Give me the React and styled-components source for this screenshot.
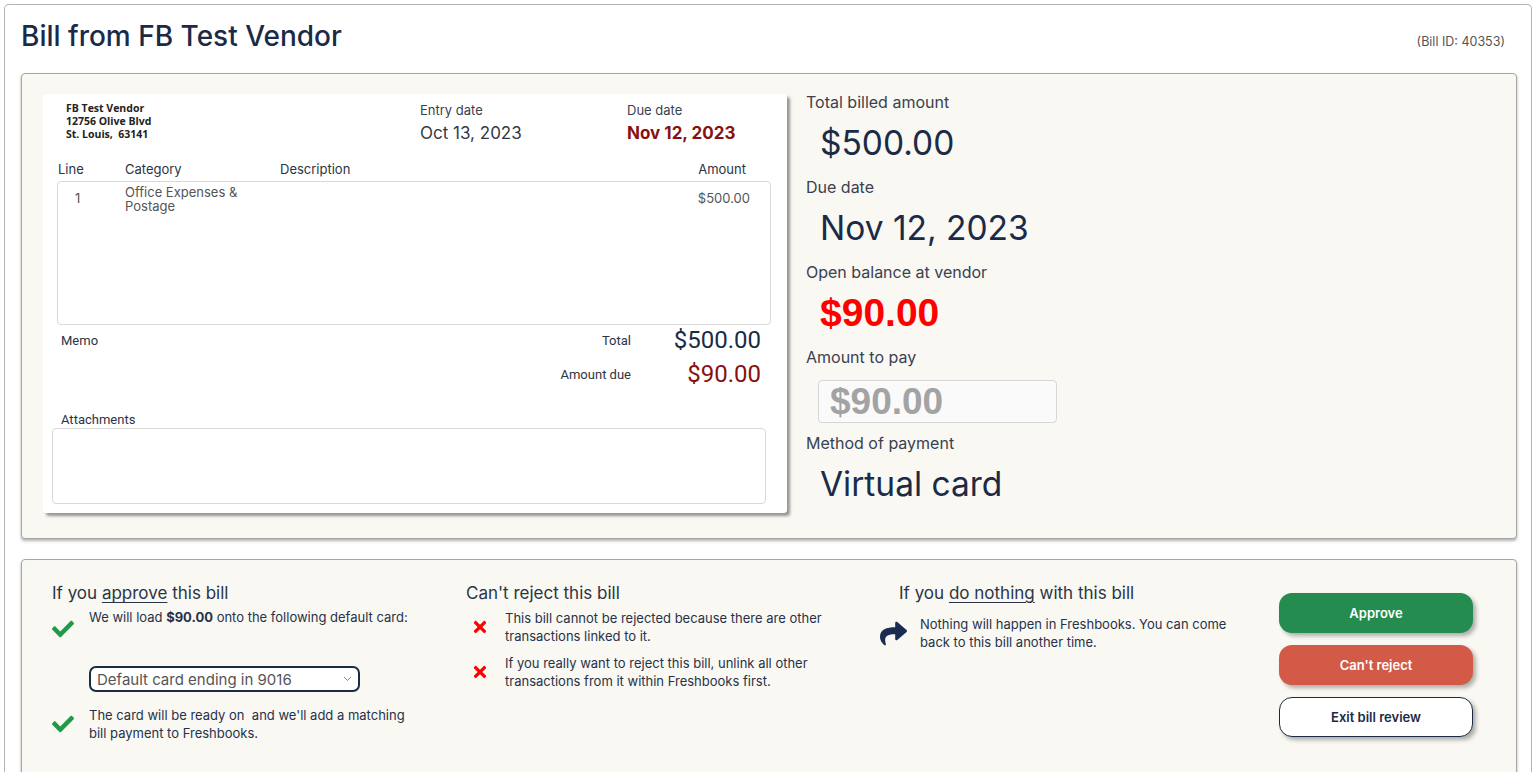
import React from 'react'
import styled, { createGlobalStyle } from 'styled-components'
import { FaCheck, FaTimes, FaShare } from 'react-icons/fa'

const GlobalStyle = createGlobalStyle`
  body {
    margin: 0;
    background: #fff;
    font-family: Inter, "Noto Sans", sans-serif;
    color: #1c2b45;
  }
`

const Page = styled.div`
  padding: 4px 4px 0;
`
const Frame = styled.div`
  border: 1px solid #b4b4b4;
  border-bottom: none;
  border-radius: 5px 5px 0 0;
  padding: 0 14px 0 16px;
  background: #fff;
`
const Header = styled.div`
  display: flex;
  justify-content: space-between;
  align-items: center;
  padding-top: 13px;
  margin-bottom: 19px;
`
const Title = styled.h1`
  margin: 0;
  font-size: 28px;
  line-height: 36px;
  font-weight: 500;
  color: #1b2b47;
`
const BillId = styled.div`
  font-size: 12.5px;
  color: #555;
  margin-right: 12px;
  margin-top: 10px;
`
const Panel = styled.div`
  background: #f9f8f2;
  border: 1px solid #a6a6a6;
  border-radius: 4px;
  box-shadow: 0 2px 3px rgba(0, 0, 0, 0.3);
`
const TopPanel = styled(Panel)`
  display: flex;
  align-items: flex-start;
  gap: 19px;
  padding: 20px 21px 25px;
`
const Invoice = styled.div`
  width: 744px;
  box-sizing: border-box;
  background: #fff;
  border-radius: 3px;
  box-shadow: 3px 3px 3px rgba(0, 0, 0, 0.4);
  padding: 7px 16px 9px 9px;
`
const InvoiceHead = styled.div`
  display: grid;
  grid-template-columns: 354px 207px 1fr;
  padding-left: 14px;
`
const Vendor = styled.div`
  font-family: "Open Sans", "Noto Sans", sans-serif;
  font-weight: 700;
  font-size: 10.5px;
  line-height: 13px;
  color: #222;
  padding-top: 1px;
`
const DateLabel = styled.div`
  font-size: 13px;
  line-height: 16px;
  margin-top: 1px;
  color: #3a4150;
`
const DateValue = styled.div`
  font-size: 17px;
  line-height: 22px;
  margin-top: 4px;
  color: ${p => (p.$due ? '#8a1010' : '#333a45')};
  font-weight: ${p => (p.$due ? 700 : 400)};
`
const LineGrid = styled.div`
  display: grid;
  grid-template-columns: 67px 155px 1fr 120px;
  font-size: 13px;
`
const LineHead = styled(LineGrid)`
  margin-top: 13px;
  padding: 0 25px 0 6px;
  line-height: 24px;
  color: #2b3444;
  & > :last-child {
    text-align: right;
  }
`
const LineBox = styled.div`
  margin-left: 5px;
  height: 144px;
  box-sizing: border-box;
  border: 1px solid #d8d8d8;
  border-radius: 4px;
  padding: 3px 20px 0 0;
`
const LineRow = styled(LineGrid)`
  color: #555;
  line-height: 14px;
`
const LineNo = styled.div`
  padding: 6px 0 0 17px;
`
const LineAmount = styled.div`
  text-align: right;
  padding-top: 6px;
`
const Totals = styled.div`
  display: grid;
  grid-template-columns: 1fr auto 130px;
  align-items: center;
  row-gap: 4px;
  padding: 0 10px 0 9px;
  font-family: Roboto, sans-serif;
`
const SmallLabel = styled.div`
  font-family: Roboto, sans-serif;
  font-size: 13px;
  color: #2b3444;
  text-align: ${p => (p.$right ? 'right' : 'left')};
`
const Money = styled.div`
  font-family: Roboto, sans-serif;
  font-size: 24px;
  line-height: 30px;
  text-align: right;
  color: ${p => (p.$due ? '#8a1010' : '#1c2b45')};
`
const AttachLabel = styled(SmallLabel)`
  margin: 23px 0 0 9px;
  line-height: 16px;
`
const AttachBox = styled.div`
  height: 74px;
  border: 1px solid #d8d8d8;
  border-radius: 4px;
  margin-right: 5px;
`
const Summary = styled.div`
  display: flex;
  flex-direction: column;
  margin-top: -3px;
  & > :last-child {
    margin-bottom: 0;
  }
`
const SumLabel = styled.div`
  font-size: 16px;
  line-height: 22px;
  color: #3a4150;
`
const SumValue = styled.div`
  font-size: ${p => (p.$red ? 39 : 33.5)}px;
  line-height: 44px;
  margin: 8px 0 11px 14px;
  color: ${p => (p.$red ? '#f00' : '#1b2b47')};
  font-family: ${p => (p.$red ? '"Liberation Sans", Arial, sans-serif' : 'Inter, sans-serif')};
  font-weight: ${p => (p.$red ? 700 : 400)};
`
const PayInput = styled.div`
  width: 239px;
  height: 43px;
  box-sizing: border-box;
  margin: 12px 0 9px 12px;
  border: 1px solid #d6d6d6;
  border-radius: 4px;
  background: #fafafa;
  font-family: "Liberation Sans", Arial, sans-serif;
  font-weight: 700;
  font-size: 37px;
  line-height: 41px;
  padding-left: 11px;
  color: #a3a3a3;
`
const BottomPanel = styled(Panel)`
  margin-top: 20px;
  display: grid;
  grid-template-columns: 414px 433px 1fr 194px;
  padding: 22px 43px 60px 30px;
  color: #27324a;
`
const Col = styled.div`
  display: flex;
  flex-direction: column;
`
const ColTitle = styled.div`
  font-size: 17px;
  line-height: 22px;
  color: #2b3447;
  u {
    text-underline-offset: 3px;
  }
`
const Item = styled.div`
  display: flex;
  align-items: center;
  gap: ${p => p.$gap || 15}px;
  min-height: 36px;
  margin-top: ${p => p.$mt || 0}px;
  margin-left: ${p => p.$ml || 0}px;
  font-size: 13px;
  line-height: 18px;
  & > svg {
    flex: none;
    margin-top: ${p => p.$iconDrop || 0}px;
  }
`
const ItemText = styled.div`
  align-self: flex-start;
  max-width: ${p => p.$w || 330}px;
  b {
    font-weight: 700;
  }
`
const CardSelect = styled.div`
  margin: 22px 0 14px 37px;
  width: 271px;
  height: 26px;
  box-sizing: border-box;
  border: 2px solid #1c2b45;
  border-radius: 7px;
  display: flex;
  align-items: center;
  justify-content: space-between;
  padding: 0 6px;
  font-size: 15px;
  color: #555;
  background: #fff;
`
const Buttons = styled.div`
  display: flex;
  flex-direction: column;
  gap: 12px;
  margin-top: 11px;
`
const Btn = styled.div`
  height: 40px;
  box-sizing: border-box;
  border-radius: 13px;
  display: flex;
  align-items: center;
  justify-content: center;
  font-size: 13px;
  font-weight: 600;
  box-shadow: 3px 3px 4px rgba(0, 0, 0, 0.3);
  background: ${p => p.$bg};
  color: ${p => (p.$bg === '#fff' ? '#1c2b45' : '#fff')};
  border: ${p => (p.$bg === '#fff' ? '1px solid #1c2b45' : 'none')};
`

export default function App() {
  return (
    <Page>
      <GlobalStyle />
      <Frame>
        <Header>
          <Title>Bill from FB Test Vendor</Title>
          <BillId>(Bill ID: 40353)</BillId>
        </Header>
        <TopPanel>
          <Invoice>
            <InvoiceHead>
              <Vendor>
                FB Test Vendor
                <br />
                12756 Olive Blvd
                <br />
                St. Louis,&nbsp; 63141
              </Vendor>
              <div>
                <DateLabel>Entry date</DateLabel>
                <DateValue>Oct 13, 2023</DateValue>
              </div>
              <div>
                <DateLabel>Due date</DateLabel>
                <DateValue $due>Nov 12, 2023</DateValue>
              </div>
            </InvoiceHead>
            <LineHead>
              <div>Line</div>
              <div>Category</div>
              <div>Description</div>
              <div>Amount</div>
            </LineHead>
            <LineBox>
              <LineRow>
                <LineNo>1</LineNo>
                <div>
                  Office Expenses &amp;
                  <br />
                  Postage
                </div>
                <div />
                <LineAmount>$500.00</LineAmount>
              </LineRow>
            </LineBox>
            <Totals>
              <SmallLabel>Memo</SmallLabel>
              <SmallLabel $right>Total</SmallLabel>
              <Money>$500.00</Money>
              <div />
              <SmallLabel $right>Amount due</SmallLabel>
              <Money $due>$90.00</Money>
            </Totals>
            <AttachLabel>Attachments</AttachLabel>
            <AttachBox />
          </Invoice>
          <Summary>
            <SumLabel>Total billed amount</SumLabel>
            <SumValue>$500.00</SumValue>
            <SumLabel>Due date</SumLabel>
            <SumValue>Nov 12, 2023</SumValue>
            <SumLabel>Open balance at vendor</SumLabel>
            <SumValue $red>$90.00</SumValue>
            <SumLabel>Amount to pay</SumLabel>
            <PayInput>$90.00</PayInput>
            <SumLabel>Method of payment</SumLabel>
            <SumValue>Virtual card</SumValue>
          </Summary>
        </TopPanel>
        <BottomPanel>
          <Col>
            <ColTitle>
              If you <u>approve</u> this bill
            </ColTitle>
            <Item $mt={4} $iconDrop={6}>
              <FaCheck size={22} color="#1f9a45" />
              <ItemText>
                We will load <b>$90.00</b> onto the following default card:
              </ItemText>
            </Item>
            <CardSelect>
              <span>Default card ending in 9016</span>
              <svg width="9" height="6" viewBox="0 0 9 6">
                <path d="M1 1l3.5 3.5L8 1" fill="none" stroke="#888" strokeWidth="1" />
              </svg>
            </CardSelect>
            <Item>
              <FaCheck size={22} color="#1f9a45" />
              <ItemText $w={330}>
                The card will be ready on &nbsp;and we'll add a matching bill payment to Freshbooks.
              </ItemText>
            </Item>
          </Col>
          <Col>
            <ColTitle>Can't reject this bill</ColTitle>
            <Item $mt={5} $gap={16} $ml={5}>
              <FaTimes size={18} color="#f00" />
              <ItemText $w={330}>
                This bill cannot be rejected because there are other transactions linked to it.
              </ItemText>
            </Item>
            <Item $mt={9} $gap={16} $ml={5}>
              <FaTimes size={18} color="#f00" />
              <ItemText $w={330}>
                If you really want to reject this bill, unlink all other transactions from it within
                Freshbooks first.
              </ItemText>
            </Item>
          </Col>
          <Col>
            <ColTitle>
              If you <u>do nothing</u> with this bill
            </ColTitle>
            <Item $mt={11} $gap={13} $ml={-19}>
              <FaShare size={27} color="#1c2b50" />
              <ItemText $w={320}>
                Nothing will happen in Freshbooks. You can come back to this bill another time.
              </ItemText>
            </Item>
          </Col>
          <Buttons>
            <Btn $bg="#238c4e">Approve</Btn>
            <Btn $bg="#d25a46">Can't reject</Btn>
            <Btn $bg="#fff">Exit bill review</Btn>
          </Buttons>
        </BottomPanel>
      </Frame>
    </Page>
  )
}
